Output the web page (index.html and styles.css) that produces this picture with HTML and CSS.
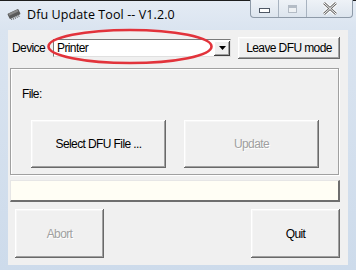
FILE: index.html
```html
<!DOCTYPE html>
<html>
<head>
<meta charset="utf-8">
<link rel="stylesheet" href="styles.css">
</head>
<body>
<div class="window">
  <div class="titlebar">
    <svg class="appicon" width="16" height="12" viewBox="0 0 16 12">
      <g transform="rotate(-25 8 6)">
        <rect x="2" y="3" width="12" height="6" rx="1" fill="#5a5a5a"/>
        <rect x="3" y="3.5" width="10" height="2" fill="#8a8a8a"/>
        <g stroke="#777" stroke-width="1">
          <line x1="3.5" y1="9" x2="3.5" y2="11"/><line x1="5.5" y1="9" x2="5.5" y2="11"/><line x1="7.5" y1="9" x2="7.5" y2="11"/><line x1="9.5" y1="9" x2="9.5" y2="11"/><line x1="11.5" y1="9" x2="11.5" y2="11"/>
        </g>
      </g>
    </svg>
    <span class="title">Dfu Update Tool -- V1.2.0</span>
    <div class="controls">
      <div class="ctl min"><span class="minbar"></span></div>
      <div class="ctl max"><span class="maxbox"></span></div>
      <div class="ctl close">
        <svg width="16" height="13" viewBox="0 0 16 13"><path d="M2 1 L14 12 M14 1 L2 12" stroke="#fff" stroke-width="4.5"/><path d="M2 1 L14 12 M14 1 L2 12" stroke="#6b6b6b" stroke-width="2.6"/><path d="M2 1 L14 12 M14 1 L2 12" stroke="#fff" stroke-width="1"/></svg>
      </div>
    </div>
  </div>
  <div class="client">
    <div class="row1">
      <span class="lbl">Device</span>
      <div class="combo">
        <span class="combotext">Printer</span>
        <span class="drop"><svg width="7" height="4" viewBox="0 0 7 4"><path d="M0 0 H7 L3.5 4 Z" fill="#000"/></svg></span>
      </div>
      <button class="btn leave">Leave DFU mode</button>
    </div>
    <div class="group">
      <div class="filelbl">File:</div>
      <div class="grouprow">
        <button class="btn big select">Select DFU File ...</button>
        <button class="btn big update disabled">Update</button>
      </div>
    </div>
    <div class="progress"></div>
    <div class="bottomrow">
      <button class="btn big2 disabled">Abort</button>
      <button class="btn big2">Quit</button>
    </div>
  </div>
</div>
<svg class="annot" width="356" height="270" viewBox="0 0 356 270">
  <ellipse cx="130" cy="46.5" rx="81.5" ry="16.5" fill="none" stroke="#e2333b" stroke-width="2.6"/>
</svg>
</body>
</html>
```
FILE: styles.css
```css
html, body {
  margin: 0;
  padding: 0;
}
body {
  width: 356px;
  height: 270px;
  overflow: hidden;
  position: relative;
  font-family: "Liberation Sans", Arial, sans-serif;
  font-size: 12px;
  letter-spacing: -0.6px;
  background: #cfdcec;
}
.window {
  width: 356px;
  height: 270px;
  display: flex;
  flex-direction: column;
  background: linear-gradient(to bottom, #1e1e1e 0, #1e1e1e 1px, #e4ebf4 1px, #dae4f0 30px, #cddbeb 100%);
}
.titlebar {
  height: 30px;
  display: flex;
  align-items: flex-start;
  flex-shrink: 0;
}
.appicon {
  margin: 8px 0 0 6px;
}
.title {
  margin: 6px 0 0 5px;
  font-family: "Open Sans", "Liberation Sans", sans-serif;
  font-size: 12.5px;
  color: #000;
  letter-spacing: 0.1px;
}
.controls {
  margin-left: auto;
  margin-right: 3px;
  display: flex;
  height: 17px;
  border: 1px solid #8e9aa8;
  border-top: none;
  border-radius: 0 0 4px 4px;
  background: linear-gradient(to bottom, #eef2f7, #dde5ee);
  overflow: hidden;
}
.ctl {
  display: flex;
  align-items: center;
  justify-content: center;
  border-right: 1px solid #a8b3c0;
}
.ctl:last-child { border-right: none; }
.min { width: 27px; }
.max { width: 27px; }
.close { width: 45px; }
.minbar {
  width: 9px;
  height: 3px;
  border: 1px solid #4f5865;
  background: #fff;
  margin-top: 3px;
}
.maxbox {
  width: 7px;
  height: 6px;
  border: 1px solid #b4bcc6;
  box-shadow: inset 0 2px 0 #b4bcc6;
  background: #eef1f4;
}
.client {
  flex: 1;
  margin: 0 8px 5px 8px;
  background: #f0f0f0;
  display: flex;
  flex-direction: column;
}
.row1 {
  display: flex;
  align-items: center;
  margin-top: 7px;
  height: 22px;
}
.lbl {
  margin-left: 4px;
  width: 41px;
  color: #000;
}
.combo {
  width: 178px;
  height: 18px;
  box-sizing: border-box;
  background: #fff;
  border-top: 1px solid #7a7a7a;
  border-left: 1px solid #7a7a7a;
  border-right: 1px solid #e0e0e0;
  border-bottom: 1px solid #e0e0e0;
  display: flex;
  align-items: center;
}
.combotext {
  flex: 1;
  padding-left: 3px;
}
.drop {
  width: 16px;
  height: 15px;
  margin-right: 0;
  box-sizing: border-box;
  background: #f0f0f0;
  box-shadow: inset -1px -1px #404040, inset 1px 1px #fff, inset -2px -2px #a0a0a0;
  display: flex;
  align-items: center;
  justify-content: center;
}
.btn {
  font-family: "Liberation Sans", Arial, sans-serif;
  font-size: 12px;
  letter-spacing: -0.6px;
  color: #000;
  background: #f0f0f0;
  border: none;
  padding: 0;
  margin: 0;
  box-sizing: border-box;
  box-shadow: inset -1px -1px #696969, inset 1px 1px #ffffff, inset -2px -2px #a0a0a0, inset 2px 2px #f6f6f6;
}
.leave {
  margin-left: 7px;
  width: 102px;
  height: 22px;
}
.group {
  margin: 9px 0 0 2px;
  width: 329px;
  height: 107px;
  box-sizing: border-box;
  border: 1px solid #a0a0a0;
  box-shadow: 1px 1px 0 #fff, inset 1px 1px 0 #fff;
  display: flex;
  flex-direction: column;
}
.filelbl {
  margin: 18px 0 0 11px;
  height: 15px;
}
.grouprow {
  display: flex;
  margin: 18px 0 0 20px;
  gap: 18px;
}
.big {
  width: 135px;
  height: 48px;
}
.disabled {
  color: #a0a0a0;
  text-shadow: 1px 1px 0 #fff;
}
.progress {
  margin: 5px 0 0 2px;
  width: 330px;
  height: 22px;
  box-sizing: border-box;
  background: #fffef5;
  border-top: 1px solid #e6e6e6;
  border-left: 1px solid #e6e6e6;
  border-right: 2px solid #6e6e6e;
  border-bottom: 2px solid #6e6e6e;
}
.bottomrow {
  display: flex;
  justify-content: space-between;
  margin: 7px 0 0 7px;
  width: 325px;
}
.big2 {
  width: 89px;
  height: 49px;
}
.annot {
  position: absolute;
  left: 0;
  top: 0;
  pointer-events: none;
}
```
